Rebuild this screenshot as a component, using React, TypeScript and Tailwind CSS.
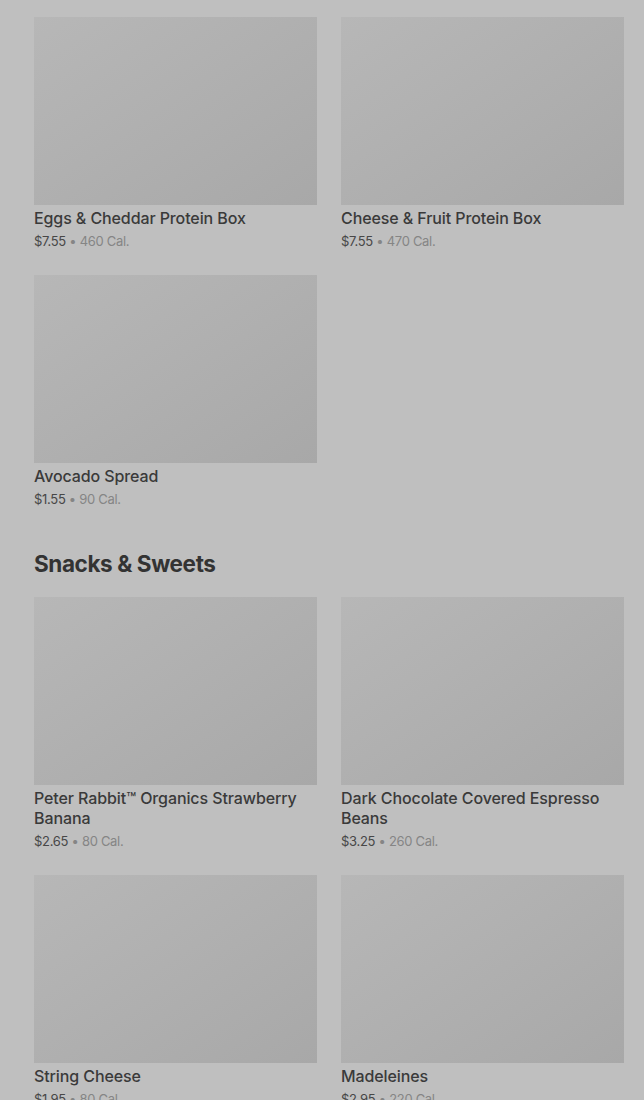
import React from "react";

type Item = { name: string; price: string; cal: string };

const breakfast: Item[] = [
  { name: "Eggs & Cheddar Protein Box", price: "$7.55", cal: "460 Cal." },
  { name: "Cheese & Fruit Protein Box", price: "$7.55", cal: "470 Cal." },
  { name: "Avocado Spread", price: "$1.55", cal: "90 Cal." },
];

const snacks: Item[] = [
  { name: "Peter Rabbit™ Organics Strawberry Banana", price: "$2.65", cal: "80 Cal." },
  { name: "Dark Chocolate Covered Espresso Beans", price: "$3.25", cal: "260 Cal." },
  { name: "String Cheese", price: "$1.95", cal: "80 Cal." },
  { name: "Madeleines", price: "$2.95", cal: "220 Cal." },
];

function Card({ item }: { item: Item }) {
  return (
    <div className="flex flex-col">
      <div className="h-[188px] w-full bg-gradient-to-br from-[#b7b7b7] to-[#a8a8a8]" />
      <div className="mt-[3px] text-[16px] leading-[20px] font-medium tracking-[-0.1px] text-[#3a3a3a]">
        {item.name}
      </div>
      <div className="mt-[3px] text-[13px] leading-[20px] tracking-[-0.3px]">
        <span className="text-[#474747]">{item.price}</span>
        <span className="text-[#858585]"> • {item.cal}</span>
      </div>
    </div>
  );
}

export default function App() {
  return (
    <div
      className="min-h-[1100px] w-full bg-[#bfbfbf] pl-[34px] pr-[20px] pt-[17px]"
      style={{ fontFamily: "Inter, 'Noto Sans', sans-serif" }}
    >
      <div className="grid grid-cols-2 gap-x-[24px] gap-y-[24px]">
        {breakfast.map((it) => (
          <Card key={it.name} item={it} />
        ))}
      </div>
      <h2 className="mt-[41px] mb-[19px] text-[22.5px] leading-[28px] font-bold tracking-[-0.4px] text-[#333333]">
        Snacks &amp; Sweets
      </h2>
      <div className="grid grid-cols-2 gap-x-[24px] gap-y-[24px]">
        {snacks.map((it) => (
          <Card key={it.name} item={it} />
        ))}
      </div>
    </div>
  );
}
